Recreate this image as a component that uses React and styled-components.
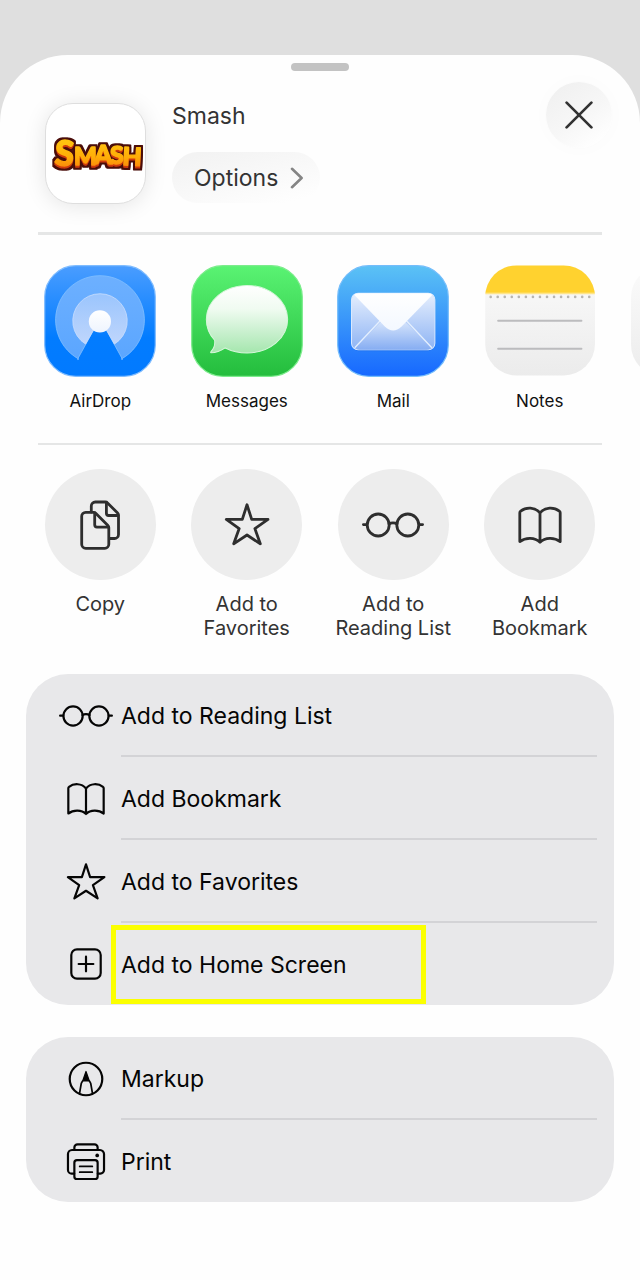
import React from 'react';
import styled, { createGlobalStyle } from 'styled-components';

const GlobalStyle = createGlobalStyle`
  *, *::before, *::after { box-sizing: border-box; }
  body {
    margin: 0;
    background: #dfdfdf;
    font-family: Inter, "Liberation Sans", sans-serif;
    -webkit-font-smoothing: antialiased;
  }
  button { font: inherit; color: inherit; border: 0; background: none; padding: 0; margin: 0; cursor: pointer; }
  h1 { margin: 0; }
  svg { display: block; flex: none; }
`;

const Page = styled.div`
  display: flex;
  flex-direction: column;
  min-height: 100vh;
  padding-top: 55px;
`;

const Sheet = styled.main`
  flex: 1;
  background: #fefefe;
  border-radius: 68px 68px 0 0;
  padding: 8px 0 32px;
  overflow: hidden;
`;

const Grabber = styled.div`
  width: 58px;
  height: 8px;
  margin: 0 auto;
  border-radius: 4px;
  background: #c3c3c3;
`;

const Header = styled.header`
  display: flex;
  align-items: flex-start;
  gap: 26px;
  padding: 11px 28px 28px 45px;
`;

const SiteIcon = styled.div`
  display: grid;
  place-items: center;
  width: 101px;
  height: 101px;
  margin-top: 21px;
  border-radius: 28px;
  background: #fff;
  border: 1px solid #dedede;
  box-shadow: 0 2px 22px rgba(0, 0, 0, 0.1);
`;

const SiteInfo = styled.div`
  flex: 1;
  display: flex;
  flex-direction: column;
  align-items: flex-start;
  gap: 23px;
  margin-top: 21px;
`;

const SiteName = styled.h1`
  font-size: 23px;
  line-height: 26px;
  font-weight: 400;
  color: #333;
`;

const OptionsButton = styled.button`
  display: flex;
  align-items: center;
  gap: 12px;
  height: 51px;
  padding: 0 16px 0 22px;
  border-radius: 26px;
  background: linear-gradient(165deg, #f3f3f3 10%, #f9f9f9 55%, #fefefe 90%);
  font-size: 23px;
  font-weight: 400;
  color: #333;
`;

const CloseButton = styled.button`
  display: grid;
  place-items: center;
  width: 66px;
  height: 66px;
  border-radius: 50%;
  background: linear-gradient(145deg, #f1f1f1 15%, #f7f7f7 55%, #fefefe 85%);
  box-shadow: 0 0 20px rgba(0, 0, 0, 0.02);
`;

const Divider = styled.hr`
  height: ${(p) => p.$size}px;
  margin: 0 38px;
  border: 0;
  background: #e5e6e6;
`;

const Strip = styled.nav`
  display: grid;
  grid-auto-flow: column;
  grid-auto-columns: 25%;
  padding: ${(p) => p.$pad};
  overflow: hidden;
`;

const Shortcut = styled.button`
  display: flex;
  flex-direction: column;
  align-items: center;
  gap: 12px;
`;

const AppLabel = styled.span`
  font-size: 17px;
  line-height: 24px;
  color: #111;
`;

const ActionDisc = styled.span`
  display: grid;
  place-items: center;
  width: 111px;
  height: 111px;
  border-radius: 50%;
  background: #ededed;
  color: #2e2e2e;
`;

const ActionLabel = styled.span`
  max-width: 130px;
  font-size: 20px;
  line-height: 24px;
  color: #333;
  white-space: pre-line;
`;

const Panel = styled.section`
  margin: ${(p) => p.$top}px 26px 0;
  border-radius: 42px;
  background: #e8e8ea;
`;

const Row = styled.button`
  display: flex;
  align-items: stretch;
  gap: 7px;
  width: 100%;
  height: 83px;
  padding: 0 17px 0 32px;
  text-align: left;
  color: #050505;
  &:last-child { height: 82px; }
`;

const RowIcon = styled.span`
  display: flex;
  align-items: center;
`;

const RowBody = styled.span`
  position: relative;
  flex: 1;
  display: flex;
  align-items: center;
  padding-top: 3px;
  font-size: 23px;
  line-height: 32px;
  border-bottom: 2px solid #d3d3d6;
  ${Row}:last-child & { border-bottom-color: transparent; }
`;

const Highlight = styled.span`
  position: absolute;
  inset: 2px auto -1px -10px;
  width: 315px;
  border: 5px solid #fbff00;
`;

const LineIcon = ({ size, weight, children }) => (
  <svg width={size} height={size} viewBox="0 0 64 64" fill="none" stroke="currentColor"
    strokeWidth={weight} strokeLinecap="round" strokeLinejoin="round" aria-hidden="true">
    {children}
  </svg>
);

const glyphs = {
  copy: (
    <>
      <path d="M23.3 19V13a4 4 0 0 1 4-4H37.4a3 3 0 0 1 2.1.9L49.6 20a3 3 0 0 1 .9 2.1V41.5a4 4 0 0 1-4 4H42" />
      <path d="M38.4 9.4V20.3a2.2 2.2 0 0 0 2.2 2.2H50" />
      <path d="M17.7 19.3H25.6a3 3 0 0 1 2.1.9L39.9 32.5a3 3 0 0 1 .9 2.1V51.3a4 4 0 0 1-4 4H17.7a4 4 0 0 1-4-4v-28a4 4 0 0 1 4-4Z" />
      <path d="M26.7 19.8V31.8a2.3 2.3 0 0 0 2.3 2.3H40.4" />
    </>
  ),
  star: <path d="M32 11.8 36.7 26.4H53L39.9 35.6 45.3 50.8 32 42 18.7 50.8 24.2 35.6 11.3 26.4H27.3Z" />,
  glasses: (
    <>
      <circle cx="17.2" cy="32" r="11" />
      <circle cx="46.8" cy="32" r="11" />
      <path d="M28 31C30 29.6 34 29.6 36 31M2.4 31.6H6M58 31.6H61.6" />
    </>
  ),
  book: (
    <path d="M32 20C27 13.8 18 13.8 12.6 18.2a2 2 0 0 0-.8 1.6V48.6C17.5 44.2 27 44.2 32 49.2 37 44.2 46.5 44.2 52.2 48.6V19.8a2 2 0 0 0-.8-1.6C46 13.8 37 13.8 32 20ZM32 20V49" />
  ),
  plus: (
    <>
      <rect x="15.2" y="15.2" width="33.6" height="33.6" rx="6.5" />
      <path d="M23.6 32H40.4M32 23.6V40.4" />
    </>
  ),
  markup: (
    <>
      <circle cx="32" cy="32" r="18.6" />
      <path d="M28.2 34.2 32 23.4 35.8 34.2Z" fill="currentColor" strokeWidth="1.4" />
      <path d="M28 34.4 26.6 37 24.6 48.4M36 34.4 37.4 37 39.4 48.4" strokeWidth="2" />
    </>
  ),
  print: (
    <>
      <path d="M18.7 19.4V16.6A3.6 3.6 0 0 1 22.3 13H41.7a3.6 3.6 0 0 1 3.6 3.6V19.4" />
      <path d="M18.5 46.4H15.6A4.2 4.2 0 0 1 11.4 42.2V24A4.6 4.6 0 0 1 16 19.4H48A4.6 4.6 0 0 1 52.6 24V42.2A4.2 4.2 0 0 1 48.4 46.4H45.5" />
      <rect x="18.7" y="31" width="26.6" height="21.6" rx="3" />
      <path d="M24.8 38.2H39.2M24.8 44.8H39.2" strokeWidth="2" />
      <circle cx="44.8" cy="25.6" r="2.1" fill="currentColor" stroke="none" />
    </>
  ),
};

const Gradient = ({ id, from, to, ...rest }) => (
  <linearGradient id={id} x1="0" y1="0" x2="0" y2="1" {...rest}>
    <stop offset="0" stopColor={from} />
    <stop offset="1" stopColor={to} />
  </linearGradient>
);

const Tile = ({ children }) => (
  <svg width="112" height="112" viewBox="0 0 111 111" aria-hidden="true">{children}</svg>
);

const AirDropTile = () => (
  <Tile>
    <defs>
      <linearGradient id="adBg" x1="0" y1="0" x2="0" y2="1">
        <stop offset="0" stopColor="#4a9dff" />
        <stop offset="0.65" stopColor="#027cff" />
        <stop offset="1" stopColor="#027aff" />
      </linearGradient>
      <Gradient id="adOuter" from="#6db0ff" to="#5ba6ff" />
      <Gradient id="adInner" from="#9bc5fd" to="#bfd6fc" />
      <Gradient id="adDot" from="#ffffff" to="#eef4fe" />
    </defs>
    <rect x="0.7" y="0.7" width="109.6" height="109.6" rx="31" fill="url(#adBg)" stroke="#7fbcff" strokeWidth="1.2" />
    <path d="M34.4 93.2A44 44 0 1 1 76.6 93.2Q78.6 94.4 77.2 92.4L55.5 53 33.8 92.4Q32.6 94.6 34.4 93.2Z" fill="url(#adOuter)" stroke="#83bfff" strokeWidth="0.8" strokeLinejoin="round" />
    <path d="M41.2 78.4A27 27 0 1 1 69.8 78.4L55.5 53Z" fill="url(#adInner)" stroke="#c9defd" strokeWidth="0.8" strokeLinejoin="round" />
    <circle cx="55.4" cy="55.9" r="11" fill="url(#adDot)" />
  </Tile>
);

const MessagesTile = () => (
  <Tile>
    <defs>
      <Gradient id="msBg" from="#5af373" to="#24bd3d" />
      <linearGradient id="msBubble" x1="0" y1="0" x2="0" y2="1">
        <stop offset="0" stopColor="#fff" />
        <stop offset="0.35" stopColor="#f0fbf1" />
        <stop offset="1" stopColor="#a5e6ae" />
      </linearGradient>
    </defs>
    <rect x="0.7" y="0.7" width="109.6" height="109.6" rx="31" fill="url(#msBg)" stroke="#7cec8c" strokeWidth="1.2" />
    <path d="M55.5 20.2C77.8 20.2 95.8 35.2 95.8 53.8S77.8 87.2 55.5 87.2C47.6 87.2 40 85.3 33.8 82.2 29.8 85 25.2 87 19.8 87 19.2 86.8 19.4 86.2 19.8 85.8 22.8 82.6 24 78.6 23.4 74.6 18.2 69 15.2 61.8 15.2 53.8 15.2 35.2 33.2 20.2 55.5 20.2Z" fill="url(#msBubble)" stroke="#d6f6da" strokeWidth="1" />
  </Tile>
);

const MailTile = () => (
  <Tile>
    <defs>
      <Gradient id="mlBg" from="#5bc2f5" to="#1668ff" />
      <Gradient id="mlBody" from="#e6effd" to="#8db3f4" />
      <Gradient id="mlLow" from="#dbe8fc" to="#86adf2" />
      <Gradient id="mlFlap" from="#ffffff" to="#f3f8ff" />
    </defs>
    <rect x="0.7" y="0.7" width="109.6" height="109.6" rx="31" fill="url(#mlBg)" stroke="#74bdfb" strokeWidth="1.2" />
    <rect x="14.4" y="29" width="82.6" height="56.4" rx="7" fill="#1458c9" opacity="0.22" />
    <rect x="14.4" y="28" width="82.6" height="56" rx="6.5" fill="url(#mlBody)" stroke="#dbeaff" strokeWidth="1" />
    <path d="M18 82 46 54H65L94 82Q92 84 89 84H22Q19.5 84 18 82Z" fill="url(#mlLow)" />
    <path d="M17.6 82 43 55M94 82 68.6 55" stroke="#e4effe" strokeWidth="1.3" fill="none" />
    <path d="M17 29.6Q19 28 21.6 28H90Q92.4 28 94.6 29.6L64 61Q55.6 69 47.4 61Z" fill="url(#mlFlap)" />
  </Tile>
);

const NotesTile = () => (
  <Tile>
    <defs>
      <Gradient id="ntBg" from="#fbfbfb" to="#ebebeb" />
      <clipPath id="ntClip"><rect x="1.2" y="0.4" width="108.8" height="109" rx="31" /></clipPath>
    </defs>
    <g clipPath="url(#ntClip)">
      <rect width="111" height="111" fill="url(#ntBg)" />
      <rect width="111" height="28" fill="#ffd22f" />
      <rect y="27.4" width="111" height="1.6" fill="#ffe58a" />
    </g>
    <g fill="#b7b5b0">
      {Array.from({ length: 15 }, (_, i) => (
        <circle key={i} cx={6.6 + i * 6.98} cy="31.6" r="1.3" />
      ))}
    </g>
    <path d="M14 55.2H96.6M14 83H96.6" stroke="#bcbcbe" strokeWidth="1.9" strokeLinecap="round" />
  </Tile>
);

const NextTile = () => (
  <Tile>
    <defs><Gradient id="nxBg" from="#fbfbfb" to="#ececec" /></defs>
    <rect x="1" y="1" width="109" height="109" rx="31" fill="url(#nxBg)" />
  </Tile>
);

const SmashLogo = () => (
  <svg width="98" height="60" viewBox="0 0 98 60" role="img" aria-label="Smash">
    <defs>
      <linearGradient id="lgFill" gradientUnits="userSpaceOnUse" x1="0" y1="18" x2="0" y2="43">
        <stop offset="0" stopColor="#ffc20f" />
        <stop offset="0.6" stopColor="#ffae08" />
        <stop offset="1" stopColor="#fb8a0a" />
      </linearGradient>
      <filter id="lgEdge" filterUnits="userSpaceOnUse" x="0" y="0" width="98" height="60" colorInterpolationFilters="sRGB">
        <feOffset in="SourceAlpha" dy="2" result="low" />
        <feFlood floodColor="#cf3a0c" />
        <feComposite in2="low" operator="in" result="side" />
        <feMerge result="solid">
          <feMergeNode in="side" />
          <feMergeNode in="SourceGraphic" />
        </feMerge>
        <feMorphology in="solid" operator="dilate" radius="2" result="wide" />
        <feFlood floodColor="#4a0d0a" />
        <feComposite in2="wide" operator="in" result="edge" />
        <feMerge>
          <feMergeNode in="edge" />
          <feMergeNode in="solid" />
        </feMerge>
      </filter>
    </defs>
    <text fontFamily="Lato, Inter, sans-serif" fontWeight="900" fill="url(#lgFill)"
      stroke="url(#lgFill)" strokeWidth="1.4" strokeLinejoin="round" filter="url(#lgEdge)">
      <tspan x="7" y="41" fontSize="35" rotate="4">S</tspan>
      <tspan x="27" y="41" fontSize="24">M</tspan>
      <tspan x="47" y="40" fontSize="26">A</tspan>
      <tspan x="63" y="40" fontSize="25">S</tspan>
      <tspan x="75" y="41" fontSize="25" rotate="3">H</tspan>
    </text>
  </svg>
);

const apps = [
  { name: 'AirDrop', Art: AirDropTile },
  { name: 'Messages', Art: MessagesTile },
  { name: 'Mail', Art: MailTile },
  { name: 'Notes', Art: NotesTile },
  { name: '', Art: NextTile },
];

const actions = [
  { label: 'Copy', icon: 'copy' },
  { label: 'Add to\nFavorites', icon: 'star' },
  { label: 'Add to\nReading List', icon: 'glasses' },
  { label: 'Add\nBookmark', icon: 'book' },
];

const panels = [
  {
    top: 34,
    rows: [
      { label: 'Add to Reading List', icon: 'glasses' },
      { label: 'Add Bookmark', icon: 'book' },
      { label: 'Add to Favorites', icon: 'star' },
      { label: 'Add to Home Screen', icon: 'plus', highlighted: true },
    ],
  },
  {
    top: 32,
    rows: [
      { label: 'Markup', icon: 'markup' },
      { label: 'Print', icon: 'print' },
    ],
  },
];

export default function App() {
  return (
    <Page>
      <GlobalStyle />
      <Sheet>
        <Grabber />
        <Header>
          <SiteIcon><SmashLogo /></SiteIcon>
          <SiteInfo>
            <SiteName>Smash</SiteName>
            <OptionsButton type="button">
              Options
              <svg width="14" height="22" viewBox="0 0 14 22" fill="none" stroke="#858585" strokeWidth="2.6" strokeLinecap="round" strokeLinejoin="round" aria-hidden="true">
                <path d="M2 1.8 11.6 11 2 20.2" />
              </svg>
            </OptionsButton>
          </SiteInfo>
          <CloseButton type="button" aria-label="Close">
            <svg width="28" height="28" viewBox="0 0 28 28" stroke="#333" strokeWidth="2.7" strokeLinecap="round" aria-hidden="true">
              <path d="M1.6 1.6 26.4 26.4M26.4 1.6 1.6 26.4" />
            </svg>
          </CloseButton>
        </Header>
        <Divider $size={3} />
        <Strip $pad="30px 27px" aria-label="Apps">
          {apps.map(({ name, Art }) => (
            <Shortcut key={name} type="button" aria-label={name || 'More apps'}>
              <Art />
              <AppLabel>{name}</AppLabel>
            </Shortcut>
          ))}
        </Strip>
        <Divider $size={2} />
        <Strip $pad="24px 27px 0" aria-label="Actions">
          {actions.map(({ label, icon }) => (
            <Shortcut key={label} type="button">
              <ActionDisc>
                <LineIcon size={64} weight={2.8}>{glyphs[icon]}</LineIcon>
              </ActionDisc>
              <ActionLabel>{label}</ActionLabel>
            </Shortcut>
          ))}
        </Strip>
        {panels.map(({ top, rows }) => (
          <Panel key={top} $top={top}>
            {rows.map(({ label, icon, highlighted }) => (
              <Row key={label} type="button">
                <RowIcon><LineIcon size={56} weight={2.5}>{glyphs[icon]}</LineIcon></RowIcon>
                <RowBody>
                  {label}
                  {highlighted && <Highlight />}
                </RowBody>
              </Row>
            ))}
          </Panel>
        ))}
      </Sheet>
    </Page>
  );
}
